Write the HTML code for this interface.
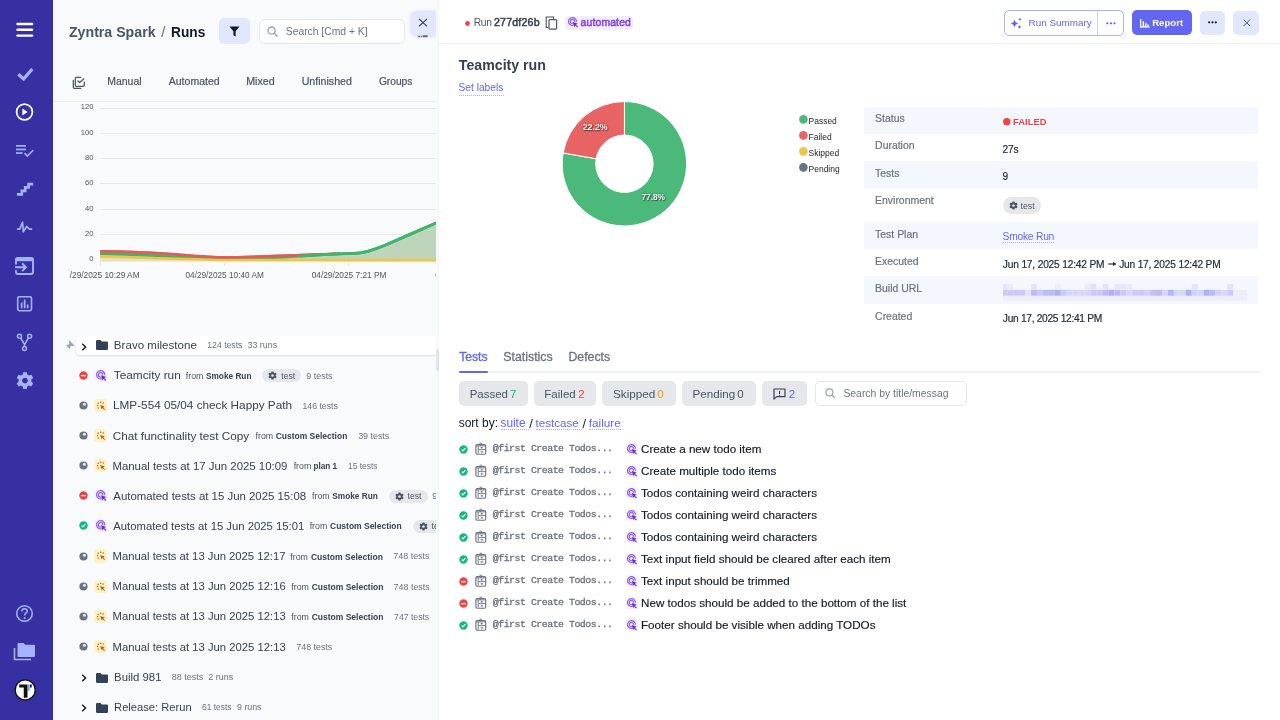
<!DOCTYPE html><html><head><meta charset="utf-8"><style>
*{margin:0;padding:0;box-sizing:border-box}
html,body{width:1280px;height:720px;overflow:hidden;background:#fff;font-family:"Liberation Sans", sans-serif;-webkit-font-smoothing:antialiased}
.t{position:absolute;white-space:nowrap;line-height:1}
svg{overflow:visible}
</style></head><body><div id="root" style="position:absolute;left:0;top:0;width:1280px;height:720px;will-change:transform">
<div style="position:absolute;left:0px;top:0px;width:53px;height:720px;background:#3730a3"></div>
<svg style="position:absolute;left:16px;top:22px;" width="18" height="16" viewBox="0 0 18 16"><g fill="#fff"><rect x="0.3" y="0.8" width="17" height="2.4" rx="1.2"/><rect x="0.3" y="6.6" width="17" height="2.4" rx="1.2"/><rect x="0.3" y="12.4" width="17" height="2.4" rx="1.2"/></g></svg>
<svg style="position:absolute;left:16px;top:66px;" width="18" height="16" viewBox="0 0 18 16"><path d="M2.3 8.2 L7.6 13 L16.3 3" fill="none" stroke="#a5b4fc" stroke-width="3.3" stroke-linecap="butt"/></svg>
<svg style="position:absolute;left:15px;top:102px;" width="19" height="20" viewBox="0 0 19 20"><circle cx="9.5" cy="10" r="7.9" fill="none" stroke="#fff" stroke-width="1.7"/><path d="M7.4 6.4 L12.6 10 L7.4 13.6Z" fill="#fff"/></svg>
<svg style="position:absolute;left:15px;top:144px;" width="20" height="14" viewBox="0 0 20 14"><g fill="#a5b4fc"><rect x="1" y="1" width="10" height="1.7"/><rect x="1" y="4.6" width="10" height="1.7"/><rect x="1" y="8.2" width="6.5" height="1.7"/></g><path d="M9.5 9.2 L12.3 12 L18.3 6" fill="none" stroke="#a5b4fc" stroke-width="1.7"/></svg>
<svg style="position:absolute;left:16px;top:182px;" width="18" height="15" viewBox="0 0 18 15"><path d="M0.9 12.4 H5.8 V8.9 H9.2 V5.4 H12.6 V2.1 H17.25" fill="none" stroke="#a5b4fc" stroke-width="2.6" stroke-linejoin="miter"/></svg>
<svg style="position:absolute;left:16px;top:221px;" width="18" height="13" viewBox="0 0 18 13"><path d="M0.9 8.1 H3.7 L6.5 1.3 L7.3 10.8 L10.7 5.5 L13.4 8.1 H16.2" fill="none" stroke="#a5b4fc" stroke-width="1.7" stroke-linejoin="round"/></svg>
<svg style="position:absolute;left:10px;top:250.7px;" width="30" height="30" viewBox="0 0 30 30"><path d="M5.95 13.4 V9.2 Q5.95 6.9 8.2 6.9 H20.8 Q23.05 6.9 23.05 9.2 V20.8 Q23.05 23.05 20.8 23.05 H8.2 Q5.95 23.05 5.95 20.8 V19.3" fill="none" stroke="#a5b4fc" stroke-width="1.9"/><rect x="5" y="6.9" width="19" height="3.3" rx="1.5" fill="#a5b4fc"/><path d="M5 16.25 H16.2 M12.1 12.4 L16 16.25 L12.1 20.1" fill="none" stroke="#a5b4fc" stroke-width="1.9"/></svg>
<svg style="position:absolute;left:16px;top:295px;" width="18" height="18" viewBox="0 0 18 18"><rect x="1.7" y="1.7" width="13.8" height="14" rx="1.6" fill="none" stroke="#a5b4fc" stroke-width="1.6"/><g fill="#a5b4fc"><rect x="4.8" y="7.5" width="1.7" height="5.8"/><rect x="7.8" y="4.6" width="1.7" height="8.7"/><rect x="10.8" y="9.5" width="1.7" height="3.8"/></g></svg>
<svg style="position:absolute;left:16px;top:333px;" width="18" height="19" viewBox="0 0 18 19"><g fill="none" stroke="#a5b4fc" stroke-width="1.5"><circle cx="3.5" cy="3.3" r="2.0"/><circle cx="13.6" cy="3.3" r="2.0"/><circle cx="8.5" cy="15.4" r="2.0"/><path d="M4.7 5.0 L8.55 11.6 L12.4 5.0 M8.55 11.6 V13.4"/></g></svg>
<svg style="position:absolute;left:14.6px;top:371px;" width="20" height="20" viewBox="0 0 20 20"><path fill="#a5b4fc" fill-rule="evenodd" d="M8.2 1.2 H11.8 L12.3 3.6 L14 4.6 L16.4 3.8 L18.2 6.9 L16.3 8.6 V10.6 L18.2 12.3 L16.4 15.4 L14 14.6 L12.3 15.6 L11.8 18 H8.2 L7.7 15.6 L6 14.6 L3.6 15.4 L1.8 12.3 L3.7 10.6 V8.6 L1.8 6.9 L3.6 3.8 L6 4.6 L7.7 3.6Z M10 6.7 A2.9 2.9 0 1 0 10.01 6.7Z"/></svg>
<svg style="position:absolute;left:15px;top:604px;" width="19" height="19" viewBox="0 0 19 19"><circle cx="9.5" cy="9.5" r="7.8" fill="none" stroke="#a5b4fc" stroke-width="1.5"/><path d="M7 7.4 Q7 4.8 9.6 4.8 Q12.2 4.8 12.2 7.2 Q12.2 8.6 10.6 9.4 Q9.6 10 9.6 11.4" fill="none" stroke="#a5b4fc" stroke-width="1.5"/><circle cx="9.6" cy="13.9" r="1" fill="#a5b4fc"/></svg>
<svg style="position:absolute;left:13px;top:642px;" width="23" height="20" viewBox="0 0 23 20"><path d="M1.5 6 V17.5 H18" fill="none" stroke="#a5b4fc" stroke-width="1.6"/><path fill="#a5b4fc" d="M4.5 2 Q4.5 1 5.5 1 H10.5 L12.2 2.8 H21 Q22 2.8 22 3.8 V14 Q22 15 21 15 H5.5 Q4.5 15 4.5 14Z"/></svg>
<svg style="position:absolute;left:14px;top:679px;" width="23" height="23" viewBox="0 0 23 23"><circle cx="11.2" cy="10.9" r="10" fill="#fff" stroke="#111" stroke-width="1.3"/><path d="M5.2 5.4 H13.5 V18.7 H9.75 V8.5 H5.2Z" fill="#111"/><rect x="13.9" y="5.4" width="1.7" height="6.4" fill="#60a5fa"/><rect x="16" y="5.4" width="1.7" height="3.1" fill="#111"/></svg>
<div style="position:absolute;left:53px;top:0px;width:385px;height:720px;background:#f9fafb"></div>
<div style="position:absolute;left:0;top:0;width:1280px;height:720px;clip-path:polygon(53px 0,436px 0,436px 720px,53px 720px)">
<div class="t" style="left:68.97px;top:25px;font-size:14.178px;color:#4b5563;font-weight:700;">Zyntra Spark</div>
<div class="t" style="left:161.20px;top:24px;font-size:15.0px;color:#6b7280;font-weight:400;">/</div>
<div class="t" style="left:171.01px;top:26px;font-size:13.716px;color:#111827;font-weight:700;">Runs</div>
<div style="position:absolute;left:219px;top:18px;width:31px;height:26px;background:#e0e7ff;border-radius:5px"></div>
<svg style="position:absolute;left:229px;top:26px;" width="11" height="11" viewBox="0 0 11 11"><path d="M0.5 0.5 H10.5 L6.6 5.2 V10.5 L4.4 9.2 V5.2Z" fill="#111827"/></svg>
<div style="position:absolute;left:258.5px;top:18.5px;width:146px;height:25.5px;background:#fff;border:1px solid #e5e7eb;border-radius:6px"></div>
<svg style="position:absolute;left:267px;top:26px;" width="12" height="11" viewBox="0 0 12 11"><circle cx="4.6" cy="4.6" r="3.6" fill="none" stroke="#9ca3af" stroke-width="1.3"/><path d="M7.3 7.3 L10.5 10.4" stroke="#9ca3af" stroke-width="1.4"/></svg>
<div class="t" style="left:285.78px;top:27px;font-size:10.34px;color:#6b7280;font-weight:400;">Search [Cmd + K]</div>
<svg style="position:absolute;left:418px;top:34.5px;" width="10" height="3" viewBox="0 0 10 3"><g fill="#4b5563" opacity=".85"><rect x="0.2" y="0.8" width="1.8" height="1.4"/><rect x="2.8" y="0.8" width="1.6" height="1.4"/><rect x="5" y="0.3" width="4.6" height="1.9"/></g></svg>
<div style="position:absolute;left:411px;top:10.5px;width:25px;height:24.5px;background:#e0e7ff;border-radius:6px 0 0 6px;box-shadow:0 1px 4px rgba(0,0,0,.15)"></div>
<svg style="position:absolute;left:418px;top:18.2px;" width="10" height="9" viewBox="0 0 10 9"><path d="M1 0.8 L9 8.4 M9 0.8 L1 8.4" stroke="#374151" stroke-width="1.15"/></svg>
<svg style="position:absolute;left:68px;top:70.7px;" width="24" height="24" viewBox="0 0 24 24"><g fill="none" stroke="#4b5563" stroke-width="1.25" stroke-linecap="round" stroke-linejoin="round"><path d="M5.3 9.3 V16.3 Q5.3 17.3 6.3 17.3 H12.8"/><path d="M12.8 6.3 H8.3 Q7.3 6.3 7.3 7.3 V14.3 Q7.3 15.3 8.3 15.3 H15.3 Q16.3 15.3 16.3 14.3 V11.2"/><path d="M10 10 L11.7 11.5 L15.7 8"/></g></svg>
<div class="t" style="left:107.16px;top:77px;font-size:10.494px;color:#4b5563;font-weight:400;-webkit-text-stroke:0.2px #4b5563">Manual</div>
<div class="t" style="left:168.75px;top:76px;font-size:10.535px;color:#4b5563;font-weight:400;-webkit-text-stroke:0.2px #4b5563">Automated</div>
<div class="t" style="left:246.14px;top:76px;font-size:10.714px;color:#4b5563;font-weight:400;-webkit-text-stroke:0.2px #4b5563">Mixed</div>
<div class="t" style="left:301.70px;top:76px;font-size:10.632px;color:#4b5563;font-weight:400;-webkit-text-stroke:0.2px #4b5563">Unfinished</div>
<div class="t" style="left:378.89px;top:77px;font-size:10.235px;color:#4b5563;font-weight:400;-webkit-text-stroke:0.2px #4b5563">Groups</div>
<div style="position:absolute;left:53px;top:101px;width:383px;height:1px;background:#eceef1"></div>
<div style="position:absolute;left:100px;top:107.5px;width:336px;height:1px;background:#e8e9ec"></div>
<div class="t" style="right:1186.5px;top:103.30px;font-size:7.6px;color:#555">120</div>
<div style="position:absolute;left:100px;top:132.8px;width:336px;height:1px;background:#e8e9ec"></div>
<div class="t" style="right:1186.5px;top:128.60px;font-size:7.6px;color:#555">100</div>
<div style="position:absolute;left:100px;top:158.1px;width:336px;height:1px;background:#e8e9ec"></div>
<div class="t" style="right:1186.5px;top:153.90px;font-size:7.6px;color:#555">80</div>
<div style="position:absolute;left:100px;top:183.4px;width:336px;height:1px;background:#e8e9ec"></div>
<div class="t" style="right:1186.5px;top:179.20px;font-size:7.6px;color:#555">60</div>
<div style="position:absolute;left:100px;top:208.7px;width:336px;height:1px;background:#e8e9ec"></div>
<div class="t" style="right:1186.5px;top:204.50px;font-size:7.6px;color:#555">40</div>
<div style="position:absolute;left:100px;top:234.0px;width:336px;height:1px;background:#e8e9ec"></div>
<div class="t" style="right:1186.5px;top:229.80px;font-size:7.6px;color:#555">20</div>
<div class="t" style="right:1186.5px;top:255.10px;font-size:7.6px;color:#555">0</div>
<svg style="position:absolute;left:0px;top:0px;" width="1280" height="720" viewBox="0 0 1280 720">
<defs><clipPath id="cc"><rect x="100" y="200" width="336" height="70"/></clipPath><clipPath id="cr"><rect x="100" y="200" width="236" height="70"/></clipPath><clipPath id="cg"><rect x="300" y="200" width="136" height="70"/></clipPath></defs>
<g clip-path="url(#cc)">
<path d="M100 253.7 C140 254.5 190 257.5 225 259 C240 259.2 250 258.8 265 258.3 C300 256.5 330 253.6 354 253.4 C364 253.3 372 250.8 385 245.3 C402 237.9 420 229.9 437 222.6 L437 260 L100 260Z" fill="#bfd5bb"/>
<path d="M100 256.5 C140 257.5 190 259.5 225 260 L437 260.3 L437 261.5 L100 261.5Z" fill="#e6e0c4"/>
<path d="M100 251.3 C120 251.3 140 252 170 254 C195 256 210 257.4 225 257.4 C250 257.4 280 256 340 253.6" fill="none" stroke="#e25b5b" stroke-width="2.7"/>
<path d="M100 253.7 C140 254.5 190 257.5 225 259 C240 259.2 250 258.8 265 258.3 C300 256.5 330 253.6 354 253.4 C364 253.3 372 250.8 385 245.3 C402 237.9 420 229.9 437 222.6" fill="none" stroke="#3db56a" stroke-width="2.8"/>
<path d="M100 256.5 C140 257.5 190 259.5 225 260 L437 260.3" fill="none" stroke="#f0c445" stroke-width="2.6"/>
<g clip-path="url(#cr)"><path d="M100 251.3 C120 251.3 140 252 170 254 C195 256 210 257.4 225 257.4 C250 257.4 280 256 340 253.6" fill="none" stroke="#e25b5b" stroke-width="2.7"/></g>
<g clip-path="url(#cg)"><path d="M100 253.7 C140 254.5 190 257.5 225 259 C240 259.2 250 258.8 265 258.3 C300 256.5 330 253.6 354 253.4 C364 253.3 372 250.8 385 245.3 C402 237.9 420 229.9 437 222.6" fill="none" stroke="#3db56a" stroke-width="2.8"/></g>
<path d="M100.5 262 V266 M224.5 262 V266 M348.5 262 V266" stroke="#e5e7eb" stroke-width="1"/>
</g></svg>
<div class="t" style="left:69.70px;top:271px;font-size:8.334px;color:#555;font-weight:400;">/29/2025 10:29 AM</div>
<div class="t" style="left:185.47px;top:272px;font-size:8.247px;color:#555;font-weight:400;">04/29/2025 10:40 AM</div>
<div class="t" style="left:311.67px;top:271px;font-size:8.317px;color:#555;font-weight:400;">04/29/2025 7:21 PM</div>
<div class="t" style="left:435.30px;top:271px;font-size:8.3px;color:#555;font-weight:400;">0</div>
<div style="position:absolute;left:76px;top:336px;width:360px;height:19px;background:#fff;border-radius:4px 0 0 4px;box-shadow:0 1px 2px rgba(0,0,0,.12)"></div>
<svg style="position:absolute;left:66px;top:340px;" width="9" height="9" viewBox="0 0 9 9"><path d="M3.2 0.6 L8.2 5.6 L6.9 6.1 L5.4 5.4 L3.9 6.9 L4.2 8.3 L3.5 8.4 L0.6 5.5 L0.8 4.9 L2.2 5.1 L3.6 3.6 L2.9 2.1Z M0.5 8.5 L2.4 6.6" fill="#9ca3af" stroke="#9ca3af" stroke-width=".4"/></svg>
<svg style="position:absolute;left:80.5px;top:343.2px;" width="6" height="8" viewBox="0 0 6 8"><path d="M1.2 0.8 L4.6 4 L1.2 7.2" fill="none" stroke="#111827" stroke-width="1.4"/></svg>
<svg style="position:absolute;left:96px;top:340px;" width="12" height="10" viewBox="0 0 12 10"><path d="M0 1.2 Q0 0 1.2 0 H4.6 L5.8 1.4 H10.8 Q12 1.4 12 2.6 V8.8 Q12 10 10.8 10 H1.2 Q0 10 0 8.8Z" fill="#334155"/></svg>
<div class="t" style="left:113.87px;top:340px;font-size:11.583px;color:#374151;font-weight:400;">Bravo milestone</div>
<div class="t" style="left:207.25px;top:341px;font-size:8.684px;color:#6b7280;font-weight:400;">124 tests</div>
<div class="t" style="left:247.44px;top:341px;font-size:8.957px;color:#6b7280;font-weight:400;">33 runs</div>
<svg style="position:absolute;left:78.95px;top:370.7px;" width="9" height="9" viewBox="0 0 9 9"><circle cx="4.5" cy="4.5" r="4.2" fill="#ef4444"/><rect x="2.2" y="3.9" width="4.6" height="1.3" rx=".5" fill="#fff"/></svg>
<div style="position:absolute;left:94.3px;top:368.7px;width:13px;height:13px;background:#f6f2ff;border-radius:3.5px"></div>
<svg style="position:absolute;left:94.3px;top:368.7px;" width="13" height="13" viewBox="0 0 13 13"><g transform="translate(1.00,0.10) scale(0.950)"><path d="M7.11 10.15 A4.3 4.3 0 1 1 10.28 6.37" fill="none" stroke="#8b5cf6" stroke-width="1.3"/><path d="M6.62 8.32 A2.4 2.4 0 1 1 8.39 6.21" fill="none" stroke="#8b5cf6" stroke-width="1.3"/><path d="M6.3 6.3 L11.8 8.3 L9.7 9.4 L12.1 11.8 L11.3 12.6 L8.9 10.2 L7.9 12.2Z" fill="#6d28d9"/></g></svg>
<div class="t" style="left:113.76px;top:370px;font-size:11.828px;color:#374151;font-weight:400;">Teamcity run</div>
<div class="t" style="left:185.85px;top:372px;font-size:8.8px;color:#4b5563;font-weight:400;">from</div>
<div class="t" style="left:206.00px;top:373px;font-size:8.272px;color:#374151;font-weight:700;">Smoke Run</div>
<div style="position:absolute;left:262.3px;top:369.40000000000003px;width:39px;height:12.8px;background:#e5e7eb;border-radius:7px"></div>
<svg style="position:absolute;left:268.3px;top:371.3px;" width="9" height="9" viewBox="0 0 9 9"><path fill="#4b5563" fill-rule="evenodd" d="M3.6 0.4 H5.4 L5.7 1.6 L6.5 2.1 L7.7 1.7 L8.6 3.2 L7.7 4 V5 L8.6 5.8 L7.7 7.3 L6.5 6.9 L5.7 7.4 L5.4 8.6 H3.6 L3.3 7.4 L2.5 6.9 L1.3 7.3 L0.4 5.8 L1.3 5 V4 L0.4 3.2 L1.3 1.7 L2.5 2.1 L3.3 1.6Z M4.5 3.2 A1.3 1.3 0 1 0 4.51 3.2Z"/></svg>
<div class="t" style="left:281.30px;top:372px;font-size:8.6px;color:#4b5563;font-weight:400;">test</div>
<div class="t" style="left:306.20px;top:372px;font-size:8.97px;color:#6b7280;font-weight:400;">9 tests</div>
<svg style="position:absolute;left:78.95px;top:400.7px;" width="9" height="9" viewBox="0 0 9 9"><circle cx="4.5" cy="4.5" r="4.1" fill="#6b7280"/><circle cx="5.4" cy="3.3" r="1.5" fill="#e5e7eb"/></svg>
<div style="position:absolute;left:94.2px;top:398.59999999999997px;width:13.3px;height:13.3px;background:#fef3c7;border-radius:3px"></div>
<svg style="position:absolute;left:94.2px;top:398.59999999999997px;" width="13.3" height="13.3" viewBox="0 0 13.3 13.3"><g fill="#c2570c"><circle cx="4.2" cy="4.3" r=".75"/><circle cx="6.7" cy="3.3" r=".75"/><circle cx="9.2" cy="4.1" r=".75"/><circle cx="3.5" cy="6.6" r=".75"/><circle cx="4.2" cy="9" r=".75"/><path d="M6.2 6 L10.8 7.6 L9.2 8.4 L11 10.3 L10.3 11 L8.5 9.1 L7.7 10.6Z"/></g></svg>
<div class="t" style="left:113.06px;top:399px;font-size:11.767px;color:#374151;font-weight:400;">LMP-554 05/04 check Happy Path</div>
<div class="t" style="left:302.55px;top:402px;font-size:8.684px;color:#6b7280;font-weight:400;">146 tests</div>
<svg style="position:absolute;left:78.95px;top:431.0px;" width="9" height="9" viewBox="0 0 9 9"><circle cx="4.5" cy="4.5" r="4.1" fill="#6b7280"/><circle cx="5.4" cy="3.3" r="1.5" fill="#e5e7eb"/></svg>
<div style="position:absolute;left:94.2px;top:428.9px;width:13.3px;height:13.3px;background:#fef3c7;border-radius:3px"></div>
<svg style="position:absolute;left:94.2px;top:428.9px;" width="13.3" height="13.3" viewBox="0 0 13.3 13.3"><g fill="#c2570c"><circle cx="4.2" cy="4.3" r=".75"/><circle cx="6.7" cy="3.3" r=".75"/><circle cx="9.2" cy="4.1" r=".75"/><circle cx="3.5" cy="6.6" r=".75"/><circle cx="4.2" cy="9" r=".75"/><path d="M6.2 6 L10.8 7.6 L9.2 8.4 L11 10.3 L10.3 11 L8.5 9.1 L7.7 10.6Z"/></g></svg>
<div class="t" style="left:112.71px;top:430px;font-size:11.751px;color:#374151;font-weight:400;">Chat functinality test Copy</div>
<div class="t" style="left:255.55px;top:432px;font-size:8.8px;color:#4b5563;font-weight:400;">from</div>
<div class="t" style="left:275.66px;top:432px;font-size:8.496px;color:#374151;font-weight:700;">Custom Selection</div>
<div class="t" style="left:358.14px;top:432px;font-size:8.905px;color:#6b7280;font-weight:400;">39 tests</div>
<svg style="position:absolute;left:78.95px;top:461.1px;" width="9" height="9" viewBox="0 0 9 9"><circle cx="4.5" cy="4.5" r="4.1" fill="#6b7280"/><circle cx="5.4" cy="3.3" r="1.5" fill="#e5e7eb"/></svg>
<div style="position:absolute;left:94.2px;top:459.0px;width:13.3px;height:13.3px;background:#fef3c7;border-radius:3px"></div>
<svg style="position:absolute;left:94.2px;top:459.0px;" width="13.3" height="13.3" viewBox="0 0 13.3 13.3"><g fill="#c2570c"><circle cx="4.2" cy="4.3" r=".75"/><circle cx="6.7" cy="3.3" r=".75"/><circle cx="9.2" cy="4.1" r=".75"/><circle cx="3.5" cy="6.6" r=".75"/><circle cx="4.2" cy="9" r=".75"/><path d="M6.2 6 L10.8 7.6 L9.2 8.4 L11 10.3 L10.3 11 L8.5 9.1 L7.7 10.6Z"/></g></svg>
<div class="t" style="left:112.39px;top:461px;font-size:11.426px;color:#374151;font-weight:400;">Manual tests at 17 Jun 2025 10:09</div>
<div class="t" style="left:293.65px;top:462px;font-size:8.8px;color:#4b5563;font-weight:400;">from</div>
<div class="t" style="left:313.47px;top:463px;font-size:8.214px;color:#374151;font-weight:700;">plan 1</div>
<div class="t" style="left:347.97px;top:462px;font-size:8.466px;color:#6b7280;font-weight:400;">15 tests</div>
<svg style="position:absolute;left:78.95px;top:491.1px;" width="9" height="9" viewBox="0 0 9 9"><circle cx="4.5" cy="4.5" r="4.2" fill="#ef4444"/><rect x="2.2" y="3.9" width="4.6" height="1.3" rx=".5" fill="#fff"/></svg>
<div style="position:absolute;left:94.3px;top:489.1px;width:13px;height:13px;background:#f6f2ff;border-radius:3.5px"></div>
<svg style="position:absolute;left:94.3px;top:489.1px;" width="13" height="13" viewBox="0 0 13 13"><g transform="translate(1.00,0.10) scale(0.950)"><path d="M7.11 10.15 A4.3 4.3 0 1 1 10.28 6.37" fill="none" stroke="#8b5cf6" stroke-width="1.3"/><path d="M6.62 8.32 A2.4 2.4 0 1 1 8.39 6.21" fill="none" stroke="#8b5cf6" stroke-width="1.3"/><path d="M6.3 6.3 L11.8 8.3 L9.7 9.4 L12.1 11.8 L11.3 12.6 L8.9 10.2 L7.9 12.2Z" fill="#6d28d9"/></g></svg>
<div class="t" style="left:113.30px;top:491px;font-size:11.429px;color:#374151;font-weight:400;">Automated tests at 15 Jun 2025 15:08</div>
<div class="t" style="left:312.05px;top:492px;font-size:8.8px;color:#4b5563;font-weight:400;">from</div>
<div class="t" style="left:332.35px;top:493px;font-size:8.262px;color:#374151;font-weight:700;">Smoke Run</div>
<div style="position:absolute;left:388.6px;top:489.80000000000007px;width:39px;height:12.8px;background:#e5e7eb;border-radius:7px"></div>
<svg style="position:absolute;left:394.6px;top:491.70000000000005px;" width="9" height="9" viewBox="0 0 9 9"><path fill="#4b5563" fill-rule="evenodd" d="M3.6 0.4 H5.4 L5.7 1.6 L6.5 2.1 L7.7 1.7 L8.6 3.2 L7.7 4 V5 L8.6 5.8 L7.7 7.3 L6.5 6.9 L5.7 7.4 L5.4 8.6 H3.6 L3.3 7.4 L2.5 6.9 L1.3 7.3 L0.4 5.8 L1.3 5 V4 L0.4 3.2 L1.3 1.7 L2.5 2.1 L3.3 1.6Z M4.5 3.2 A1.3 1.3 0 1 0 4.51 3.2Z"/></svg>
<div class="t" style="left:407.60px;top:492px;font-size:8.6px;color:#4b5563;font-weight:400;">test</div>
<div class="t" style="left:432.20px;top:492px;font-size:8.97px;color:#6b7280;font-weight:400;">9 tests</div>
<svg style="position:absolute;left:78.95px;top:521.2px;" width="9" height="9" viewBox="0 0 9 9"><circle cx="4.5" cy="4.5" r="4.2" fill="#10b981"/><path d="M2.6 4.6 L3.9 5.9 L6.5 3.2" fill="none" stroke="#fff" stroke-width="1.2"/></svg>
<div style="position:absolute;left:94.3px;top:519.2px;width:13px;height:13px;background:#f6f2ff;border-radius:3.5px"></div>
<svg style="position:absolute;left:94.3px;top:519.2px;" width="13" height="13" viewBox="0 0 13 13"><g transform="translate(1.00,0.10) scale(0.950)"><path d="M7.11 10.15 A4.3 4.3 0 1 1 10.28 6.37" fill="none" stroke="#8b5cf6" stroke-width="1.3"/><path d="M6.62 8.32 A2.4 2.4 0 1 1 8.39 6.21" fill="none" stroke="#8b5cf6" stroke-width="1.3"/><path d="M6.3 6.3 L11.8 8.3 L9.7 9.4 L12.1 11.8 L11.3 12.6 L8.9 10.2 L7.9 12.2Z" fill="#6d28d9"/></g></svg>
<div class="t" style="left:113.30px;top:521px;font-size:11.314px;color:#374151;font-weight:400;">Automated tests at 15 Jun 2025 15:01</div>
<div class="t" style="left:309.65px;top:522px;font-size:8.8px;color:#4b5563;font-weight:400;">from</div>
<div class="t" style="left:330.06px;top:522px;font-size:8.496px;color:#374151;font-weight:700;">Custom Selection</div>
<div style="position:absolute;left:412.6px;top:519.9000000000001px;width:39px;height:12.8px;background:#e5e7eb;border-radius:7px"></div>
<svg style="position:absolute;left:418.6px;top:521.8000000000001px;" width="9" height="9" viewBox="0 0 9 9"><path fill="#4b5563" fill-rule="evenodd" d="M3.6 0.4 H5.4 L5.7 1.6 L6.5 2.1 L7.7 1.7 L8.6 3.2 L7.7 4 V5 L8.6 5.8 L7.7 7.3 L6.5 6.9 L5.7 7.4 L5.4 8.6 H3.6 L3.3 7.4 L2.5 6.9 L1.3 7.3 L0.4 5.8 L1.3 5 V4 L0.4 3.2 L1.3 1.7 L2.5 2.1 L3.3 1.6Z M4.5 3.2 A1.3 1.3 0 1 0 4.51 3.2Z"/></svg>
<div class="t" style="left:431.60px;top:522px;font-size:8.6px;color:#4b5563;font-weight:400;">test</div>
<svg style="position:absolute;left:78.95px;top:551.5px;" width="9" height="9" viewBox="0 0 9 9"><circle cx="4.5" cy="4.5" r="4.1" fill="#6b7280"/><circle cx="5.4" cy="3.3" r="1.5" fill="#e5e7eb"/></svg>
<div style="position:absolute;left:94.2px;top:549.4px;width:13.3px;height:13.3px;background:#fef3c7;border-radius:3px"></div>
<svg style="position:absolute;left:94.2px;top:549.4px;" width="13.3" height="13.3" viewBox="0 0 13.3 13.3"><g fill="#c2570c"><circle cx="4.2" cy="4.3" r=".75"/><circle cx="6.7" cy="3.3" r=".75"/><circle cx="9.2" cy="4.1" r=".75"/><circle cx="3.5" cy="6.6" r=".75"/><circle cx="4.2" cy="9" r=".75"/><path d="M6.2 6 L10.8 7.6 L9.2 8.4 L11 10.3 L10.3 11 L8.5 9.1 L7.7 10.6Z"/></g></svg>
<div class="t" style="left:112.60px;top:551px;font-size:11.272px;color:#374151;font-weight:400;">Manual tests at 13 Jun 2025 12:17</div>
<div class="t" style="left:290.35px;top:553px;font-size:8.8px;color:#4b5563;font-weight:400;">from</div>
<div class="t" style="left:310.91px;top:553px;font-size:8.538px;color:#374151;font-weight:700;">Custom Selection</div>
<div class="t" style="left:393.30px;top:552px;font-size:8.931px;color:#6b7280;font-weight:400;">748 tests</div>
<svg style="position:absolute;left:78.95px;top:581.7px;" width="9" height="9" viewBox="0 0 9 9"><circle cx="4.5" cy="4.5" r="4.1" fill="#6b7280"/><circle cx="5.4" cy="3.3" r="1.5" fill="#e5e7eb"/></svg>
<div style="position:absolute;left:94.2px;top:579.6px;width:13.3px;height:13.3px;background:#fef3c7;border-radius:3px"></div>
<svg style="position:absolute;left:94.2px;top:579.6px;" width="13.3" height="13.3" viewBox="0 0 13.3 13.3"><g fill="#c2570c"><circle cx="4.2" cy="4.3" r=".75"/><circle cx="6.7" cy="3.3" r=".75"/><circle cx="9.2" cy="4.1" r=".75"/><circle cx="3.5" cy="6.6" r=".75"/><circle cx="4.2" cy="9" r=".75"/><path d="M6.2 6 L10.8 7.6 L9.2 8.4 L11 10.3 L10.3 11 L8.5 9.1 L7.7 10.6Z"/></g></svg>
<div class="t" style="left:112.60px;top:581px;font-size:11.297px;color:#374151;font-weight:400;">Manual tests at 13 Jun 2025 12:16</div>
<div class="t" style="left:291.35px;top:583px;font-size:8.8px;color:#4b5563;font-weight:400;">from</div>
<div class="t" style="left:311.66px;top:583px;font-size:8.508px;color:#374151;font-weight:700;">Custom Selection</div>
<div class="t" style="left:393.55px;top:583px;font-size:8.931px;color:#6b7280;font-weight:400;">748 tests</div>
<svg style="position:absolute;left:78.95px;top:611.8px;" width="9" height="9" viewBox="0 0 9 9"><circle cx="4.5" cy="4.5" r="4.1" fill="#6b7280"/><circle cx="5.4" cy="3.3" r="1.5" fill="#e5e7eb"/></svg>
<div style="position:absolute;left:94.2px;top:609.6999999999999px;width:13.3px;height:13.3px;background:#fef3c7;border-radius:3px"></div>
<svg style="position:absolute;left:94.2px;top:609.6999999999999px;" width="13.3" height="13.3" viewBox="0 0 13.3 13.3"><g fill="#c2570c"><circle cx="4.2" cy="4.3" r=".75"/><circle cx="6.7" cy="3.3" r=".75"/><circle cx="9.2" cy="4.1" r=".75"/><circle cx="3.5" cy="6.6" r=".75"/><circle cx="4.2" cy="9" r=".75"/><path d="M6.2 6 L10.8 7.6 L9.2 8.4 L11 10.3 L10.3 11 L8.5 9.1 L7.7 10.6Z"/></g></svg>
<div class="t" style="left:112.60px;top:611px;font-size:11.297px;color:#374151;font-weight:400;">Manual tests at 13 Jun 2025 12:13</div>
<div class="t" style="left:291.35px;top:613px;font-size:8.8px;color:#4b5563;font-weight:400;">from</div>
<div class="t" style="left:311.66px;top:613px;font-size:8.508px;color:#374151;font-weight:700;">Custom Selection</div>
<div class="t" style="left:394.07px;top:613px;font-size:8.679px;color:#6b7280;font-weight:400;">747 tests</div>
<svg style="position:absolute;left:78.95px;top:642.0px;" width="9" height="9" viewBox="0 0 9 9"><circle cx="4.5" cy="4.5" r="4.1" fill="#6b7280"/><circle cx="5.4" cy="3.3" r="1.5" fill="#e5e7eb"/></svg>
<div style="position:absolute;left:94.2px;top:639.9px;width:13.3px;height:13.3px;background:#fef3c7;border-radius:3px"></div>
<svg style="position:absolute;left:94.2px;top:639.9px;" width="13.3" height="13.3" viewBox="0 0 13.3 13.3"><g fill="#c2570c"><circle cx="4.2" cy="4.3" r=".75"/><circle cx="6.7" cy="3.3" r=".75"/><circle cx="9.2" cy="4.1" r=".75"/><circle cx="3.5" cy="6.6" r=".75"/><circle cx="4.2" cy="9" r=".75"/><path d="M6.2 6 L10.8 7.6 L9.2 8.4 L11 10.3 L10.3 11 L8.5 9.1 L7.7 10.6Z"/></g></svg>
<div class="t" style="left:112.60px;top:642px;font-size:11.297px;color:#374151;font-weight:400;">Manual tests at 13 Jun 2025 12:13</div>
<div class="t" style="left:296.31px;top:643px;font-size:8.868px;color:#6b7280;font-weight:400;">748 tests</div>
<svg style="position:absolute;left:80.5px;top:673.9px;" width="6" height="8" viewBox="0 0 6 8"><path d="M1.2 0.8 L4.6 4 L1.2 7.2" fill="none" stroke="#111827" stroke-width="1.4"/></svg>
<svg style="position:absolute;left:96.2px;top:672.5px;" width="12" height="10" viewBox="0 0 12 10"><path d="M0 1.2 Q0 0 1.2 0 H4.6 L5.8 1.4 H10.8 Q12 1.4 12 2.6 V8.8 Q12 10 10.8 10 H1.2 Q0 10 0 8.8Z" fill="#334155"/></svg>
<div class="t" style="left:114.09px;top:672px;font-size:11.372px;color:#374151;font-weight:400;">Build 981</div>
<div class="t" style="left:171.69px;top:673px;font-size:9.006px;color:#6b7280;font-weight:400;">88 tests</div>
<div class="t" style="left:208.30px;top:673px;font-size:8.998px;color:#6b7280;font-weight:400;">2 runs</div>
<svg style="position:absolute;left:80.5px;top:703.9px;" width="6" height="8" viewBox="0 0 6 8"><path d="M1.2 0.8 L4.6 4 L1.2 7.2" fill="none" stroke="#111827" stroke-width="1.4"/></svg>
<svg style="position:absolute;left:96.2px;top:702.5px;" width="12" height="10" viewBox="0 0 12 10"><path d="M0 1.2 Q0 0 1.2 0 H4.6 L5.8 1.4 H10.8 Q12 1.4 12 2.6 V8.8 Q12 10 10.8 10 H1.2 Q0 10 0 8.8Z" fill="#334155"/></svg>
<div class="t" style="left:114.11px;top:702px;font-size:11.176px;color:#374151;font-weight:400;">Release: Rerun</div>
<div class="t" style="left:202.08px;top:703px;font-size:8.419px;color:#6b7280;font-weight:400;">61 tests</div>
<div class="t" style="left:237.10px;top:703px;font-size:8.796px;color:#6b7280;font-weight:400;">9 runs</div>
</div>
<div style="position:absolute;left:435.8px;top:348.6px;width:3px;height:22.2px;background:#e5e7eb;border-radius:2px"></div>
<div>
</div>
<div style="position:absolute;left:438.7px;top:0px;width:842px;height:720px;background:#fff;box-shadow:-1px 0 2px rgba(0,0,0,.05)"></div>
<div style="position:absolute;left:438px;top:43px;width:842px;height:1px;background:#eef0f3"></div>
<svg style="position:absolute;left:464.5px;top:20.5px;" width="5" height="5" viewBox="0 0 5 5"><circle cx="2.5" cy="2.5" r="2.4" fill="#ef4444"/></svg>
<div class="t" style="left:473.68px;top:18px;font-size:10.3px;color:#4b5563;font-weight:400;letter-spacing:-0.303px;">Run</div>
<div class="t" style="left:493.97px;top:17px;font-size:10.6px;color:#374151;font-weight:400;letter-spacing:0.207px;-webkit-text-stroke:0.5px #374151">277df26b</div>
<svg style="position:absolute;left:545px;top:16px;" width="13" height="14" viewBox="0 0 13 14"><path d="M3.5 11.5 H1.2 V1 H8.6 V3" fill="none" stroke="#4b5563" stroke-width="1.1"/><rect x="4" y="3.6" width="7.6" height="9.6" rx="1" fill="none" stroke="#4b5563" stroke-width="1.2"/></svg>
<div style="position:absolute;left:564.5px;top:16px;width:68px;height:13.5px;background:#f3eefe;border-radius:4px"></div>
<svg style="position:absolute;left:566.8px;top:16.3px;" width="13" height="13" viewBox="0 0 13 13"><g transform="scale(0.92)"><path d="M7.11 10.15 A4.3 4.3 0 1 1 10.28 6.37" fill="none" stroke="#8b5cf6" stroke-width="1.3"/><path d="M6.62 8.32 A2.4 2.4 0 1 1 8.39 6.21" fill="none" stroke="#8b5cf6" stroke-width="1.3"/><path d="M6.3 6.3 L11.8 8.3 L9.7 9.4 L12.1 11.8 L11.3 12.6 L8.9 10.2 L7.9 12.2Z" fill="#6d28d9"/></g></svg>
<div class="t" style="left:580.58px;top:18px;font-size:10.4px;color:#7c3aed;font-weight:400;letter-spacing:0.144px;-webkit-text-stroke:0.45px #7c3aed">automated</div>
<div style="position:absolute;left:1003.8px;top:10.2px;width:120px;height:25.4px;border:1px solid #a5b4fc;border-radius:5px;background:#fff"></div>
<div style="position:absolute;left:1097px;top:10.7px;width:1px;height:24.4px;background:#c7d2fe"></div>
<svg style="position:absolute;left:1009.5px;top:17px;" width="13" height="13" viewBox="0 0 13 13"><g fill="#6366f1"><path d="M4.5 2.5 Q5.2 6 8.5 6.5 Q5.2 7 4.5 10.5 Q3.8 7 0.5 6.5 Q3.8 6 4.5 2.5Z"/><path d="M10 0.5 Q10.3 2 11.8 2.3 Q10.3 2.6 10 4.1 Q9.7 2.6 8.2 2.3 Q9.7 2 10 0.5Z"/><path d="M9.5 8 Q9.8 9.6 11.4 9.9 Q9.8 10.2 9.5 11.8 Q9.2 10.2 7.6 9.9 Q9.2 9.6 9.5 8Z"/></g></svg>
<div class="t" style="left:1028.51px;top:18px;font-size:9.921px;color:#6366f1;font-weight:400;">Run Summary</div>
<svg style="position:absolute;left:1105.5px;top:21.5px;" width="10" height="3" viewBox="0 0 10 3"><g fill="#6366f1"><circle cx="1.3" cy="1.3" r="1.1"/><circle cx="4.9" cy="1.3" r="1.1"/><circle cx="8.5" cy="1.3" r="1.1"/></g></svg>
<div style="position:absolute;left:1131.6px;top:10.4px;width:60px;height:25px;background:#6366f1;border-radius:5px"></div>
<svg style="position:absolute;left:1139.5px;top:18.5px;" width="10" height="9" viewBox="0 0 10 9"><g fill="#fff"><rect x="0" y="0" width="1.3" height="8.5"/><rect x="0" y="7.3" width="9.5" height="1.3"/><rect x="2.6" y="2.2" width="1.5" height="5.5"/><rect x="5" y="3.8" width="1.5" height="4"/><rect x="7.4" y="5.5" width="1.5" height="2.3"/></g></svg>
<div class="t" style="left:1152.18px;top:18px;font-size:9.603px;color:#fff;font-weight:700;">Report</div>
<div style="position:absolute;left:1199.7px;top:10.6px;width:25.3px;height:24px;background:#e0e7ff;border-radius:5px"></div>
<svg style="position:absolute;left:1208.3px;top:21px;" width="9" height="3" viewBox="0 0 9 3"><g fill="#111827"><circle cx="1.2" cy="1.3" r="1.1"/><circle cx="4.5" cy="1.3" r="1.1"/><circle cx="7.8" cy="1.3" r="1.1"/></g></svg>
<div style="position:absolute;left:1233.4px;top:10.6px;width:25.2px;height:24.6px;background:#e0e7ff;border-radius:5px"></div>
<svg style="position:absolute;left:1242.5px;top:19.3px;" width="8" height="8" viewBox="0 0 8 8"><path d="M0.6 0.6 L7 7 M7 0.6 L0.6 7" stroke="#4b5563" stroke-width="1"/></svg>
<div class="t" style="left:458.86px;top:58px;font-size:14.178px;color:#374151;font-weight:700;">Teamcity run</div>
<div class="t" style="left:458.54px;top:83px;font-size:10.209px;color:#6366f1;font-weight:400;">Set labels</div>
<div style="position:absolute;left:459px;top:94.8px;width:44.5px;height:1px;border-top:1px dotted #a5b4fc"></div>
<svg style="position:absolute;left:0px;top:0px;" width="1280" height="720" viewBox="0 0 1280 720"><path d="M624.40 101.55 A62.2 62.2 0 1 1 563.14 152.95 L596.14 158.77 A28.7 28.7 0 1 0 624.40 135.05Z" fill="#4bb97a" stroke="#fff" stroke-width="1"/><path d="M563.14 152.95 A62.2 62.2 0 0 1 624.40 101.55 L624.40 135.05 A28.7 28.7 0 0 0 596.14 158.77Z" fill="#e86363" stroke="#fff" stroke-width="1"/></svg>
<div class="t" style="left:582.69px;top:123px;font-size:8.793px;color:#fff;font-weight:700;text-shadow:0 0 2px rgba(0,0,0,.6),1px 1px 1px rgba(0,0,0,.4)">22.2%</div>
<div class="t" style="left:641.47px;top:193px;font-size:8.303px;color:#fff;font-weight:700;text-shadow:0 0 2px rgba(0,0,0,.6),1px 1px 1px rgba(0,0,0,.4)">77.8%</div>
<svg style="position:absolute;left:798.5px;top:115.0px;" width="9" height="9" viewBox="0 0 9 9"><circle cx="4.4" cy="4.4" r="4.3" fill="#4bb97a"/></svg>
<div class="t" style="left:808.60px;top:117px;font-size:8.46px;color:#333;font-weight:400;text-shadow:0 0 1px rgba(0,0,0,.15)">Passed</div>
<svg style="position:absolute;left:798.5px;top:130.79999999999998px;" width="9" height="9" viewBox="0 0 9 9"><circle cx="4.4" cy="4.4" r="4.3" fill="#e86363"/></svg>
<div class="t" style="left:808.60px;top:133px;font-size:8.46px;color:#333;font-weight:400;text-shadow:0 0 1px rgba(0,0,0,.15)">Failed</div>
<svg style="position:absolute;left:798.5px;top:147.2px;" width="9" height="9" viewBox="0 0 9 9"><circle cx="4.4" cy="4.4" r="4.3" fill="#f0c445"/></svg>
<div class="t" style="left:808.60px;top:149px;font-size:8.46px;color:#333;font-weight:400;text-shadow:0 0 1px rgba(0,0,0,.15)">Skipped</div>
<svg style="position:absolute;left:798.5px;top:163.1px;" width="9" height="9" viewBox="0 0 9 9"><circle cx="4.4" cy="4.4" r="4.3" fill="#6b7280"/></svg>
<div class="t" style="left:808.60px;top:165px;font-size:8.46px;color:#333;font-weight:400;text-shadow:0 0 1px rgba(0,0,0,.15)">Pending</div>
<div style="position:absolute;left:864.2px;top:106.7px;width:394.1px;height:26.9px;background:#f5f7ff"></div>
<div class="t" style="left:875.10px;top:114px;font-size:10.45px;color:#6b7280;font-weight:400;-webkit-text-stroke:0.2px #6b7280">Status</div>
<div class="t" style="left:875.10px;top:141px;font-size:10.45px;color:#6b7280;font-weight:400;-webkit-text-stroke:0.2px #6b7280">Duration</div>
<div style="position:absolute;left:864.2px;top:161.1px;width:394.1px;height:27.5px;background:#f5f7ff"></div>
<div class="t" style="left:875.10px;top:169px;font-size:10.45px;color:#6b7280;font-weight:400;-webkit-text-stroke:0.2px #6b7280">Tests</div>
<div class="t" style="left:875.10px;top:196px;font-size:10.45px;color:#6b7280;font-weight:400;-webkit-text-stroke:0.2px #6b7280">Environment</div>
<div style="position:absolute;left:864.2px;top:221.7px;width:394.1px;height:27.1px;background:#f5f7ff"></div>
<div class="t" style="left:875.10px;top:230px;font-size:10.45px;color:#6b7280;font-weight:400;-webkit-text-stroke:0.2px #6b7280">Test Plan</div>
<div class="t" style="left:875.10px;top:257px;font-size:10.45px;color:#6b7280;font-weight:400;-webkit-text-stroke:0.2px #6b7280">Executed</div>
<div style="position:absolute;left:864.2px;top:276.3px;width:394.1px;height:27.4px;background:#f5f7ff"></div>
<div class="t" style="left:875.10px;top:284px;font-size:10.45px;color:#6b7280;font-weight:400;-webkit-text-stroke:0.2px #6b7280">Build URL</div>
<div class="t" style="left:875.10px;top:312px;font-size:10.45px;color:#6b7280;font-weight:400;-webkit-text-stroke:0.2px #6b7280">Created</div>
<svg style="position:absolute;left:1003px;top:117.9px;" width="8" height="8" viewBox="0 0 8 8"><circle cx="3.8" cy="3.8" r="3.7" fill="#ef4444"/></svg>
<div class="t" style="left:1013.09px;top:117px;font-size:9.42px;color:#ef4444;font-weight:700;">FAILED</div>
<div class="t" style="left:1002.49px;top:145px;font-size:10.2px;color:#1f2937;font-weight:400;letter-spacing:-0.128px;-webkit-text-stroke:0.2px #1f2937">27s</div>
<div class="t" style="left:1002.40px;top:172px;font-size:10.1px;color:#1f2937;font-weight:400;-webkit-text-stroke:0.2px #1f2937">9</div>
<div style="position:absolute;left:1003px;top:197.2px;width:38.2px;height:16.6px;background:#e5e7eb;border-radius:8.5px"></div>
<svg style="position:absolute;left:1008.5px;top:200.8px;" width="9" height="9" viewBox="0 0 9 9"><path fill="#4b5563" fill-rule="evenodd" d="M3.6 0.4 H5.4 L5.7 1.6 L6.5 2.1 L7.7 1.7 L8.6 3.2 L7.7 4 V5 L8.6 5.8 L7.7 7.3 L6.5 6.9 L5.7 7.4 L5.4 8.6 H3.6 L3.3 7.4 L2.5 6.9 L1.3 7.3 L0.4 5.8 L1.3 5 V4 L0.4 3.2 L1.3 1.7 L2.5 2.1 L3.3 1.6Z M4.5 3.2 A1.3 1.3 0 1 0 4.51 3.2Z"/></svg>
<div class="t" style="left:1020.50px;top:202px;font-size:8.8px;color:#4b5563;font-weight:400;">test</div>
<div class="t" style="left:1002.54px;top:232px;font-size:10.3px;color:#6366f1;font-weight:400;letter-spacing:-0.248px;">Smoke Run</div>
<div style="position:absolute;left:1003px;top:242.3px;width:51px;height:1px;border-top:1px dotted #a5b4fc"></div>
<div class="t" style="left:1002.85px;top:260px;font-size:10.2px;color:#1f2937;font-weight:400;letter-spacing:-0.18px;-webkit-text-stroke:0.2px #1f2937">Jun 17, 2025 12:42 PM</div>
<div class="t" style="left:1119.15px;top:260px;font-size:10.2px;color:#1f2937;font-weight:400;letter-spacing:-0.19px;-webkit-text-stroke:0.2px #1f2937">Jun 17, 2025 12:42 PM</div>
<svg style="position:absolute;left:1107.6px;top:261.3px;" width="9" height="6" viewBox="0 0 9 6"><path d="M0.3 3 H6" stroke="#1f2937" stroke-width="1.1"/><path d="M5 0.9 L8.6 3 L5 5.1Z" fill="#1f2937"/></svg>
<div class="t" style="left:1002.85px;top:314px;font-size:10.2px;color:#1f2937;font-weight:400;letter-spacing:-0.3px;-webkit-text-stroke:0.2px #1f2937">Jun 17, 2025 12:41 PM</div>
<svg style="position:absolute;left:0px;top:0px;" width="1280" height="720" viewBox="0 0 1280 720"><rect x="1003" y="295.7" width="244" height="5" fill="#eceefb"/><rect x="1003.00" y="289.8" width="4.25" height="5.9" fill="#cac9f8"/><rect x="1007.25" y="289.8" width="5.95" height="5.9" fill="#cac9f8"/><rect x="1013.20" y="289.8" width="5.95" height="5.9" fill="#cac9f8"/><rect x="1019.15" y="289.8" width="5.95" height="5.9" fill="#cac9f8"/><rect x="1025.10" y="289.8" width="5.95" height="5.9" fill="#e3e4fb"/><rect x="1031.05" y="289.8" width="5.95" height="5.9" fill="#bdbbf6"/><rect x="1037.00" y="289.8" width="5.95" height="5.9" fill="#cac9f8"/><rect x="1042.95" y="289.8" width="5.95" height="5.9" fill="#bdbbf6"/><rect x="1048.90" y="289.8" width="5.95" height="5.9" fill="#bdbbf6"/><rect x="1054.85" y="289.8" width="5.95" height="5.9" fill="#b0aef4"/><rect x="1060.80" y="289.8" width="5.95" height="5.9" fill="#cac9f8"/><rect x="1066.75" y="289.8" width="5.95" height="5.9" fill="#d6d6f9"/><rect x="1072.70" y="289.8" width="5.95" height="5.9" fill="#d6d6f9"/><rect x="1078.65" y="289.8" width="5.95" height="5.9" fill="#d6d6f9"/><rect x="1084.60" y="289.8" width="5.95" height="5.9" fill="#d6d6f9"/><rect x="1090.55" y="289.8" width="5.95" height="5.9" fill="#cac9f8"/><rect x="1096.50" y="289.8" width="5.95" height="5.9" fill="#cac9f8"/><rect x="1102.45" y="289.8" width="5.95" height="5.9" fill="#bdbbf6"/><rect x="1108.40" y="289.8" width="5.95" height="5.9" fill="#b0aef4"/><rect x="1114.35" y="289.8" width="5.95" height="5.9" fill="#bdbbf6"/><rect x="1120.30" y="289.8" width="5.95" height="5.9" fill="#cac9f8"/><rect x="1126.25" y="289.8" width="5.95" height="5.9" fill="#d6d6f9"/><rect x="1132.20" y="289.8" width="5.95" height="5.9" fill="#cac9f8"/><rect x="1138.15" y="289.8" width="5.95" height="5.9" fill="#cac9f8"/><rect x="1144.10" y="289.8" width="5.95" height="5.9" fill="#d0d0f8"/><rect x="1150.05" y="289.8" width="5.95" height="5.9" fill="#c3c2f7"/><rect x="1156.00" y="289.8" width="5.95" height="5.9" fill="#bdbbf6"/><rect x="1161.95" y="289.8" width="5.95" height="5.9" fill="#d6d6f9"/><rect x="1167.90" y="289.8" width="5.95" height="5.9" fill="#b6b5f5"/><rect x="1173.85" y="289.8" width="5.95" height="5.9" fill="#d6d6f9"/><rect x="1179.80" y="289.8" width="5.95" height="5.9" fill="#d6d6f9"/><rect x="1185.75" y="289.8" width="5.95" height="5.9" fill="#b0aef4"/><rect x="1191.70" y="289.8" width="5.95" height="5.9" fill="#d0d0f8"/><rect x="1197.65" y="289.8" width="5.95" height="5.9" fill="#d6d6f9"/><rect x="1203.60" y="289.8" width="5.95" height="5.9" fill="#b0aef4"/><rect x="1209.55" y="289.8" width="5.95" height="5.9" fill="#bdbbf6"/><rect x="1215.50" y="289.8" width="5.95" height="5.9" fill="#d0d0f8"/><rect x="1221.45" y="289.8" width="5.95" height="5.9" fill="#d6d6f9"/><rect x="1227.40" y="289.8" width="5.95" height="5.9" fill="#cac9f8"/><rect x="1233.35" y="289.8" width="13.6" height="5.9" fill="#eceef7"/><rect x="1003.00" y="283.9" width="4.25" height="5.9" fill="#e3e4fb"/><rect x="1007.25" y="283.9" width="5.95" height="5.9" fill="#eaeafc"/><rect x="1031.05" y="283.9" width="5.95" height="5.9" fill="#e3e4fb"/><rect x="1054.85" y="283.9" width="5.95" height="5.9" fill="#ecedfc"/><rect x="1084.60" y="283.9" width="5.95" height="5.9" fill="#eaeafc"/><rect x="1090.55" y="283.9" width="5.95" height="5.9" fill="#e1e1fb"/><rect x="1102.45" y="283.9" width="5.95" height="5.9" fill="#e3e4fb"/><rect x="1114.35" y="283.9" width="5.95" height="5.9" fill="#e6e6fc"/><rect x="1120.30" y="283.9" width="5.95" height="5.9" fill="#e6e6fc"/><rect x="1126.25" y="283.9" width="5.95" height="5.9" fill="#e8e9fc"/><rect x="1191.70" y="283.9" width="5.95" height="5.9" fill="#e3e4fb"/><rect x="1227.40" y="283.9" width="5.95" height="5.9" fill="#e3e4fb"/></svg>
<div class="t" style="left:459.16px;top:351px;font-size:12.193px;color:#6366f1;font-weight:400;-webkit-text-stroke:0.35px #6366f1">Tests</div>
<div class="t" style="left:503.34px;top:351px;font-size:12.347px;color:#6b7280;font-weight:400;-webkit-text-stroke:0.3px #6b7280">Statistics</div>
<div class="t" style="left:568.52px;top:351px;font-size:12.275px;color:#6b7280;font-weight:400;-webkit-text-stroke:0.3px #6b7280">Defects</div>
<div style="position:absolute;left:459px;top:371px;width:802px;height:1.7px;background:#f1f2f4"></div>
<div style="position:absolute;left:459px;top:371px;width:28.5px;height:2px;background:#6366f1;border-radius:1px"></div>
<div style="position:absolute;left:459px;top:381px;width:68.75px;height:25.2px;background:#e5e7eb;border-radius:5px"></div>
<div class="t" style="left:469.68px;top:389px;font-size:11.489px;color:#4b5563;font-weight:400;">Passed</div>
<div class="t" style="left:510.03px;top:389px;font-size:11.55px;color:#10b981;font-weight:400;">7</div>
<div style="position:absolute;left:533.75px;top:381px;width:62.25px;height:25.2px;background:#e5e7eb;border-radius:5px"></div>
<div class="t" style="left:544.33px;top:389px;font-size:11.531px;color:#4b5563;font-weight:400;">Failed</div>
<div class="t" style="left:578.17px;top:389px;font-size:11.55px;color:#ef4444;font-weight:400;">2</div>
<div style="position:absolute;left:601.5px;top:381px;width:74.39999999999998px;height:25.2px;background:#e5e7eb;border-radius:5px"></div>
<div class="t" style="left:612.97px;top:388px;font-size:11.726px;color:#4b5563;font-weight:400;">Skipped</div>
<div class="t" style="left:657.31px;top:389px;font-size:11.55px;color:#f59e0b;font-weight:400;">0</div>
<div style="position:absolute;left:681.9px;top:381px;width:74.10000000000002px;height:25.2px;background:#e5e7eb;border-radius:5px"></div>
<div class="t" style="left:692.57px;top:388px;font-size:11.603px;color:#4b5563;font-weight:400;">Pending</div>
<div class="t" style="left:737.32px;top:389px;font-size:11.55px;color:#4b5563;font-weight:400;">0</div>
<div style="position:absolute;left:761.6px;top:381px;width:45.6px;height:25.2px;background:#e5e7eb;border-radius:5px"></div>
<svg style="position:absolute;left:773px;top:387.5px;" width="13" height="12" viewBox="0 0 13 12"><path d="M1 1 H12 V8.6 H3.6 L1 11.2Z" fill="none" stroke="#374151" stroke-width="1.2" stroke-linejoin="round"/><rect x="6" y="2.8" width="1.1" height="3.2" fill="#374151"/><rect x="6" y="6.6" width="1.1" height="1.1" fill="#374151"/></svg>
<div class="t" style="left:788.80px;top:389px;font-size:11.55px;color:#6366f1;font-weight:400;">2</div>
<div style="position:absolute;left:815.3px;top:380.9px;width:151.7px;height:25.1px;background:#fff;border:1px solid #e5e7eb;border-radius:5px"></div>
<svg style="position:absolute;left:825px;top:388px;" width="12" height="11" viewBox="0 0 12 11"><circle cx="4.4" cy="4.4" r="3.5" fill="none" stroke="#9ca3af" stroke-width="1.2"/><path d="M7 7 L10 10" stroke="#9ca3af" stroke-width="1.3"/></svg>
<div style="position:absolute;left:843.4px;top:386px;width:106px;height:16px;overflow:hidden">
<div class="t" style="left:0;top:2.70px;font-size:10.4px;color:#6b7280">Search by title/message</div>
</div>
<div class="t" style="left:458.64px;top:417px;font-size:12.013px;color:#111827;font-weight:400;">sort by:</div>
<div class="t" style="left:500.44px;top:418px;font-size:11.892px;color:#6366f1;font-weight:400;">suite</div>
<div style="position:absolute;left:501px;top:429.3px;width:27.5px;height:1px;border-top:1px dotted #a5b4fc"></div>
<div class="t" style="left:529.30px;top:418px;font-size:12.8px;color:#111827;font-weight:400;">/</div>
<div class="t" style="left:535.42px;top:417px;font-size:11.678px;color:#6366f1;font-weight:400;">testcase</div>
<div style="position:absolute;left:535.5px;top:429.3px;width:46.5px;height:1px;border-top:1px dotted #a5b4fc"></div>
<div class="t" style="left:582.60px;top:418px;font-size:12.8px;color:#111827;font-weight:400;">/</div>
<div class="t" style="left:588.82px;top:417px;font-size:11.745px;color:#6366f1;font-weight:400;">failure</div>
<div style="position:absolute;left:589px;top:429.3px;width:32px;height:1px;border-top:1px dotted #a5b4fc"></div>
<svg style="position:absolute;left:459.35px;top:444.5px;" width="9" height="9" viewBox="0 0 9 9"><circle cx="4.5" cy="4.5" r="4.2" fill="#10b981"/><path d="M2.6 4.6 L3.9 5.9 L6.5 3.2" fill="none" stroke="#fff" stroke-width="1.2"/></svg>
<svg style="position:absolute;left:475px;top:442.7px;" width="12" height="12" viewBox="0 0 12 12"><rect x="0.9" y="1.6" width="9.8" height="9.6" rx="1.2" fill="none" stroke="#6b7280" stroke-width="1.15"/><circle cx="5.8" cy="1.1" r="1.1" fill="none" stroke="#6b7280" stroke-width="0.9"/><path d="M1 2.9 H10.6 M3.2 2.9 V10.6 M3.2 6.6 H10.6" stroke="#6b7280" stroke-width="0.9"/><rect x="5.6" y="4.1" width="2.2" height="1.3" rx=".6" fill="#6b7280"/><rect x="5.6" y="8.2" width="2.6" height="1.3" rx=".6" fill="#6b7280"/></svg>
<div class="t" style="left:492.80px;top:444px;font-size:9.9px;color:#6b7280;font-weight:400;font-family:'Liberation Mono', monospace;letter-spacing:-0.484px;-webkit-text-stroke:0.3px #6b7280">@first Create Todos...</div>
<div style="position:absolute;left:625px;top:442.7px;width:12.5px;height:12.5px;background:#f6f2ff;border-radius:3.5px"></div>
<svg style="position:absolute;left:625px;top:442.7px;" width="12.5" height="12.5" viewBox="0 0 12.5 12.5"><g transform="translate(0.96,0.10) scale(0.913)"><path d="M7.11 10.15 A4.3 4.3 0 1 1 10.28 6.37" fill="none" stroke="#8b5cf6" stroke-width="1.3"/><path d="M6.62 8.32 A2.4 2.4 0 1 1 8.39 6.21" fill="none" stroke="#8b5cf6" stroke-width="1.3"/><path d="M6.3 6.3 L11.8 8.3 L9.7 9.4 L12.1 11.8 L11.3 12.6 L8.9 10.2 L7.9 12.2Z" fill="#6d28d9"/></g></svg>
<div class="t" style="left:641.00px;top:443px;font-size:11.65px;color:#111827;font-weight:400;-webkit-text-stroke:0.15px #111827">Create a new todo item</div>
<svg style="position:absolute;left:459.35px;top:466.5px;" width="9" height="9" viewBox="0 0 9 9"><circle cx="4.5" cy="4.5" r="4.2" fill="#10b981"/><path d="M2.6 4.6 L3.9 5.9 L6.5 3.2" fill="none" stroke="#fff" stroke-width="1.2"/></svg>
<svg style="position:absolute;left:475px;top:464.7px;" width="12" height="12" viewBox="0 0 12 12"><rect x="0.9" y="1.6" width="9.8" height="9.6" rx="1.2" fill="none" stroke="#6b7280" stroke-width="1.15"/><circle cx="5.8" cy="1.1" r="1.1" fill="none" stroke="#6b7280" stroke-width="0.9"/><path d="M1 2.9 H10.6 M3.2 2.9 V10.6 M3.2 6.6 H10.6" stroke="#6b7280" stroke-width="0.9"/><rect x="5.6" y="4.1" width="2.2" height="1.3" rx=".6" fill="#6b7280"/><rect x="5.6" y="8.2" width="2.6" height="1.3" rx=".6" fill="#6b7280"/></svg>
<div class="t" style="left:492.80px;top:466px;font-size:9.9px;color:#6b7280;font-weight:400;font-family:'Liberation Mono', monospace;letter-spacing:-0.484px;-webkit-text-stroke:0.3px #6b7280">@first Create Todos...</div>
<div style="position:absolute;left:625px;top:464.7px;width:12.5px;height:12.5px;background:#f6f2ff;border-radius:3.5px"></div>
<svg style="position:absolute;left:625px;top:464.7px;" width="12.5" height="12.5" viewBox="0 0 12.5 12.5"><g transform="translate(0.96,0.10) scale(0.913)"><path d="M7.11 10.15 A4.3 4.3 0 1 1 10.28 6.37" fill="none" stroke="#8b5cf6" stroke-width="1.3"/><path d="M6.62 8.32 A2.4 2.4 0 1 1 8.39 6.21" fill="none" stroke="#8b5cf6" stroke-width="1.3"/><path d="M6.3 6.3 L11.8 8.3 L9.7 9.4 L12.1 11.8 L11.3 12.6 L8.9 10.2 L7.9 12.2Z" fill="#6d28d9"/></g></svg>
<div class="t" style="left:641.00px;top:465px;font-size:11.65px;color:#111827;font-weight:400;-webkit-text-stroke:0.15px #111827">Create multiple todo items</div>
<svg style="position:absolute;left:459.35px;top:488.5px;" width="9" height="9" viewBox="0 0 9 9"><circle cx="4.5" cy="4.5" r="4.2" fill="#10b981"/><path d="M2.6 4.6 L3.9 5.9 L6.5 3.2" fill="none" stroke="#fff" stroke-width="1.2"/></svg>
<svg style="position:absolute;left:475px;top:486.7px;" width="12" height="12" viewBox="0 0 12 12"><rect x="0.9" y="1.6" width="9.8" height="9.6" rx="1.2" fill="none" stroke="#6b7280" stroke-width="1.15"/><circle cx="5.8" cy="1.1" r="1.1" fill="none" stroke="#6b7280" stroke-width="0.9"/><path d="M1 2.9 H10.6 M3.2 2.9 V10.6 M3.2 6.6 H10.6" stroke="#6b7280" stroke-width="0.9"/><rect x="5.6" y="4.1" width="2.2" height="1.3" rx=".6" fill="#6b7280"/><rect x="5.6" y="8.2" width="2.6" height="1.3" rx=".6" fill="#6b7280"/></svg>
<div class="t" style="left:492.80px;top:488px;font-size:9.9px;color:#6b7280;font-weight:400;font-family:'Liberation Mono', monospace;letter-spacing:-0.484px;-webkit-text-stroke:0.3px #6b7280">@first Create Todos...</div>
<div style="position:absolute;left:625px;top:486.7px;width:12.5px;height:12.5px;background:#f6f2ff;border-radius:3.5px"></div>
<svg style="position:absolute;left:625px;top:486.7px;" width="12.5" height="12.5" viewBox="0 0 12.5 12.5"><g transform="translate(0.96,0.10) scale(0.913)"><path d="M7.11 10.15 A4.3 4.3 0 1 1 10.28 6.37" fill="none" stroke="#8b5cf6" stroke-width="1.3"/><path d="M6.62 8.32 A2.4 2.4 0 1 1 8.39 6.21" fill="none" stroke="#8b5cf6" stroke-width="1.3"/><path d="M6.3 6.3 L11.8 8.3 L9.7 9.4 L12.1 11.8 L11.3 12.6 L8.9 10.2 L7.9 12.2Z" fill="#6d28d9"/></g></svg>
<div class="t" style="left:641.00px;top:487px;font-size:11.65px;color:#111827;font-weight:400;-webkit-text-stroke:0.15px #111827">Todos containing weird characters</div>
<svg style="position:absolute;left:459.35px;top:510.5px;" width="9" height="9" viewBox="0 0 9 9"><circle cx="4.5" cy="4.5" r="4.2" fill="#10b981"/><path d="M2.6 4.6 L3.9 5.9 L6.5 3.2" fill="none" stroke="#fff" stroke-width="1.2"/></svg>
<svg style="position:absolute;left:475px;top:508.7px;" width="12" height="12" viewBox="0 0 12 12"><rect x="0.9" y="1.6" width="9.8" height="9.6" rx="1.2" fill="none" stroke="#6b7280" stroke-width="1.15"/><circle cx="5.8" cy="1.1" r="1.1" fill="none" stroke="#6b7280" stroke-width="0.9"/><path d="M1 2.9 H10.6 M3.2 2.9 V10.6 M3.2 6.6 H10.6" stroke="#6b7280" stroke-width="0.9"/><rect x="5.6" y="4.1" width="2.2" height="1.3" rx=".6" fill="#6b7280"/><rect x="5.6" y="8.2" width="2.6" height="1.3" rx=".6" fill="#6b7280"/></svg>
<div class="t" style="left:492.80px;top:510px;font-size:9.9px;color:#6b7280;font-weight:400;font-family:'Liberation Mono', monospace;letter-spacing:-0.484px;-webkit-text-stroke:0.3px #6b7280">@first Create Todos...</div>
<div style="position:absolute;left:625px;top:508.7px;width:12.5px;height:12.5px;background:#f6f2ff;border-radius:3.5px"></div>
<svg style="position:absolute;left:625px;top:508.7px;" width="12.5" height="12.5" viewBox="0 0 12.5 12.5"><g transform="translate(0.96,0.10) scale(0.913)"><path d="M7.11 10.15 A4.3 4.3 0 1 1 10.28 6.37" fill="none" stroke="#8b5cf6" stroke-width="1.3"/><path d="M6.62 8.32 A2.4 2.4 0 1 1 8.39 6.21" fill="none" stroke="#8b5cf6" stroke-width="1.3"/><path d="M6.3 6.3 L11.8 8.3 L9.7 9.4 L12.1 11.8 L11.3 12.6 L8.9 10.2 L7.9 12.2Z" fill="#6d28d9"/></g></svg>
<div class="t" style="left:641.00px;top:509px;font-size:11.65px;color:#111827;font-weight:400;-webkit-text-stroke:0.15px #111827">Todos containing weird characters</div>
<svg style="position:absolute;left:459.35px;top:532.5px;" width="9" height="9" viewBox="0 0 9 9"><circle cx="4.5" cy="4.5" r="4.2" fill="#10b981"/><path d="M2.6 4.6 L3.9 5.9 L6.5 3.2" fill="none" stroke="#fff" stroke-width="1.2"/></svg>
<svg style="position:absolute;left:475px;top:530.7px;" width="12" height="12" viewBox="0 0 12 12"><rect x="0.9" y="1.6" width="9.8" height="9.6" rx="1.2" fill="none" stroke="#6b7280" stroke-width="1.15"/><circle cx="5.8" cy="1.1" r="1.1" fill="none" stroke="#6b7280" stroke-width="0.9"/><path d="M1 2.9 H10.6 M3.2 2.9 V10.6 M3.2 6.6 H10.6" stroke="#6b7280" stroke-width="0.9"/><rect x="5.6" y="4.1" width="2.2" height="1.3" rx=".6" fill="#6b7280"/><rect x="5.6" y="8.2" width="2.6" height="1.3" rx=".6" fill="#6b7280"/></svg>
<div class="t" style="left:492.80px;top:532px;font-size:9.9px;color:#6b7280;font-weight:400;font-family:'Liberation Mono', monospace;letter-spacing:-0.484px;-webkit-text-stroke:0.3px #6b7280">@first Create Todos...</div>
<div style="position:absolute;left:625px;top:530.7px;width:12.5px;height:12.5px;background:#f6f2ff;border-radius:3.5px"></div>
<svg style="position:absolute;left:625px;top:530.7px;" width="12.5" height="12.5" viewBox="0 0 12.5 12.5"><g transform="translate(0.96,0.10) scale(0.913)"><path d="M7.11 10.15 A4.3 4.3 0 1 1 10.28 6.37" fill="none" stroke="#8b5cf6" stroke-width="1.3"/><path d="M6.62 8.32 A2.4 2.4 0 1 1 8.39 6.21" fill="none" stroke="#8b5cf6" stroke-width="1.3"/><path d="M6.3 6.3 L11.8 8.3 L9.7 9.4 L12.1 11.8 L11.3 12.6 L8.9 10.2 L7.9 12.2Z" fill="#6d28d9"/></g></svg>
<div class="t" style="left:641.00px;top:531px;font-size:11.65px;color:#111827;font-weight:400;-webkit-text-stroke:0.15px #111827">Todos containing weird characters</div>
<svg style="position:absolute;left:459.35px;top:554.5px;" width="9" height="9" viewBox="0 0 9 9"><circle cx="4.5" cy="4.5" r="4.2" fill="#10b981"/><path d="M2.6 4.6 L3.9 5.9 L6.5 3.2" fill="none" stroke="#fff" stroke-width="1.2"/></svg>
<svg style="position:absolute;left:475px;top:552.7px;" width="12" height="12" viewBox="0 0 12 12"><rect x="0.9" y="1.6" width="9.8" height="9.6" rx="1.2" fill="none" stroke="#6b7280" stroke-width="1.15"/><circle cx="5.8" cy="1.1" r="1.1" fill="none" stroke="#6b7280" stroke-width="0.9"/><path d="M1 2.9 H10.6 M3.2 2.9 V10.6 M3.2 6.6 H10.6" stroke="#6b7280" stroke-width="0.9"/><rect x="5.6" y="4.1" width="2.2" height="1.3" rx=".6" fill="#6b7280"/><rect x="5.6" y="8.2" width="2.6" height="1.3" rx=".6" fill="#6b7280"/></svg>
<div class="t" style="left:492.80px;top:554px;font-size:9.9px;color:#6b7280;font-weight:400;font-family:'Liberation Mono', monospace;letter-spacing:-0.484px;-webkit-text-stroke:0.3px #6b7280">@first Create Todos...</div>
<div style="position:absolute;left:625px;top:552.7px;width:12.5px;height:12.5px;background:#f6f2ff;border-radius:3.5px"></div>
<svg style="position:absolute;left:625px;top:552.7px;" width="12.5" height="12.5" viewBox="0 0 12.5 12.5"><g transform="translate(0.96,0.10) scale(0.913)"><path d="M7.11 10.15 A4.3 4.3 0 1 1 10.28 6.37" fill="none" stroke="#8b5cf6" stroke-width="1.3"/><path d="M6.62 8.32 A2.4 2.4 0 1 1 8.39 6.21" fill="none" stroke="#8b5cf6" stroke-width="1.3"/><path d="M6.3 6.3 L11.8 8.3 L9.7 9.4 L12.1 11.8 L11.3 12.6 L8.9 10.2 L7.9 12.2Z" fill="#6d28d9"/></g></svg>
<div class="t" style="left:641.00px;top:553px;font-size:11.65px;color:#111827;font-weight:400;-webkit-text-stroke:0.15px #111827">Text input field should be cleared after each item</div>
<svg style="position:absolute;left:459.35px;top:576.5px;" width="9" height="9" viewBox="0 0 9 9"><circle cx="4.5" cy="4.5" r="4.2" fill="#ef4444"/><rect x="2.2" y="3.9" width="4.6" height="1.3" rx=".5" fill="#fff"/></svg>
<svg style="position:absolute;left:475px;top:574.7px;" width="12" height="12" viewBox="0 0 12 12"><rect x="0.9" y="1.6" width="9.8" height="9.6" rx="1.2" fill="none" stroke="#6b7280" stroke-width="1.15"/><circle cx="5.8" cy="1.1" r="1.1" fill="none" stroke="#6b7280" stroke-width="0.9"/><path d="M1 2.9 H10.6 M3.2 2.9 V10.6 M3.2 6.6 H10.6" stroke="#6b7280" stroke-width="0.9"/><rect x="5.6" y="4.1" width="2.2" height="1.3" rx=".6" fill="#6b7280"/><rect x="5.6" y="8.2" width="2.6" height="1.3" rx=".6" fill="#6b7280"/></svg>
<div class="t" style="left:492.80px;top:576px;font-size:9.9px;color:#6b7280;font-weight:400;font-family:'Liberation Mono', monospace;letter-spacing:-0.484px;-webkit-text-stroke:0.3px #6b7280">@first Create Todos...</div>
<div style="position:absolute;left:625px;top:574.7px;width:12.5px;height:12.5px;background:#f6f2ff;border-radius:3.5px"></div>
<svg style="position:absolute;left:625px;top:574.7px;" width="12.5" height="12.5" viewBox="0 0 12.5 12.5"><g transform="translate(0.96,0.10) scale(0.913)"><path d="M7.11 10.15 A4.3 4.3 0 1 1 10.28 6.37" fill="none" stroke="#8b5cf6" stroke-width="1.3"/><path d="M6.62 8.32 A2.4 2.4 0 1 1 8.39 6.21" fill="none" stroke="#8b5cf6" stroke-width="1.3"/><path d="M6.3 6.3 L11.8 8.3 L9.7 9.4 L12.1 11.8 L11.3 12.6 L8.9 10.2 L7.9 12.2Z" fill="#6d28d9"/></g></svg>
<div class="t" style="left:641.00px;top:575px;font-size:11.65px;color:#111827;font-weight:400;-webkit-text-stroke:0.15px #111827">Text input should be trimmed</div>
<svg style="position:absolute;left:459.35px;top:598.5px;" width="9" height="9" viewBox="0 0 9 9"><circle cx="4.5" cy="4.5" r="4.2" fill="#ef4444"/><rect x="2.2" y="3.9" width="4.6" height="1.3" rx=".5" fill="#fff"/></svg>
<svg style="position:absolute;left:475px;top:596.7px;" width="12" height="12" viewBox="0 0 12 12"><rect x="0.9" y="1.6" width="9.8" height="9.6" rx="1.2" fill="none" stroke="#6b7280" stroke-width="1.15"/><circle cx="5.8" cy="1.1" r="1.1" fill="none" stroke="#6b7280" stroke-width="0.9"/><path d="M1 2.9 H10.6 M3.2 2.9 V10.6 M3.2 6.6 H10.6" stroke="#6b7280" stroke-width="0.9"/><rect x="5.6" y="4.1" width="2.2" height="1.3" rx=".6" fill="#6b7280"/><rect x="5.6" y="8.2" width="2.6" height="1.3" rx=".6" fill="#6b7280"/></svg>
<div class="t" style="left:492.80px;top:598px;font-size:9.9px;color:#6b7280;font-weight:400;font-family:'Liberation Mono', monospace;letter-spacing:-0.484px;-webkit-text-stroke:0.3px #6b7280">@first Create Todos...</div>
<div style="position:absolute;left:625px;top:596.7px;width:12.5px;height:12.5px;background:#f6f2ff;border-radius:3.5px"></div>
<svg style="position:absolute;left:625px;top:596.7px;" width="12.5" height="12.5" viewBox="0 0 12.5 12.5"><g transform="translate(0.96,0.10) scale(0.913)"><path d="M7.11 10.15 A4.3 4.3 0 1 1 10.28 6.37" fill="none" stroke="#8b5cf6" stroke-width="1.3"/><path d="M6.62 8.32 A2.4 2.4 0 1 1 8.39 6.21" fill="none" stroke="#8b5cf6" stroke-width="1.3"/><path d="M6.3 6.3 L11.8 8.3 L9.7 9.4 L12.1 11.8 L11.3 12.6 L8.9 10.2 L7.9 12.2Z" fill="#6d28d9"/></g></svg>
<div class="t" style="left:641.00px;top:597px;font-size:11.65px;color:#111827;font-weight:400;-webkit-text-stroke:0.15px #111827">New todos should be added to the bottom of the list</div>
<svg style="position:absolute;left:459.35px;top:620.5px;" width="9" height="9" viewBox="0 0 9 9"><circle cx="4.5" cy="4.5" r="4.2" fill="#10b981"/><path d="M2.6 4.6 L3.9 5.9 L6.5 3.2" fill="none" stroke="#fff" stroke-width="1.2"/></svg>
<svg style="position:absolute;left:475px;top:618.7px;" width="12" height="12" viewBox="0 0 12 12"><rect x="0.9" y="1.6" width="9.8" height="9.6" rx="1.2" fill="none" stroke="#6b7280" stroke-width="1.15"/><circle cx="5.8" cy="1.1" r="1.1" fill="none" stroke="#6b7280" stroke-width="0.9"/><path d="M1 2.9 H10.6 M3.2 2.9 V10.6 M3.2 6.6 H10.6" stroke="#6b7280" stroke-width="0.9"/><rect x="5.6" y="4.1" width="2.2" height="1.3" rx=".6" fill="#6b7280"/><rect x="5.6" y="8.2" width="2.6" height="1.3" rx=".6" fill="#6b7280"/></svg>
<div class="t" style="left:492.80px;top:620px;font-size:9.9px;color:#6b7280;font-weight:400;font-family:'Liberation Mono', monospace;letter-spacing:-0.484px;-webkit-text-stroke:0.3px #6b7280">@first Create Todos...</div>
<div style="position:absolute;left:625px;top:618.7px;width:12.5px;height:12.5px;background:#f6f2ff;border-radius:3.5px"></div>
<svg style="position:absolute;left:625px;top:618.7px;" width="12.5" height="12.5" viewBox="0 0 12.5 12.5"><g transform="translate(0.96,0.10) scale(0.913)"><path d="M7.11 10.15 A4.3 4.3 0 1 1 10.28 6.37" fill="none" stroke="#8b5cf6" stroke-width="1.3"/><path d="M6.62 8.32 A2.4 2.4 0 1 1 8.39 6.21" fill="none" stroke="#8b5cf6" stroke-width="1.3"/><path d="M6.3 6.3 L11.8 8.3 L9.7 9.4 L12.1 11.8 L11.3 12.6 L8.9 10.2 L7.9 12.2Z" fill="#6d28d9"/></g></svg>
<div class="t" style="left:641.00px;top:619px;font-size:11.65px;color:#111827;font-weight:400;-webkit-text-stroke:0.15px #111827">Footer should be visible when adding TODOs</div>
</div></body></html>
